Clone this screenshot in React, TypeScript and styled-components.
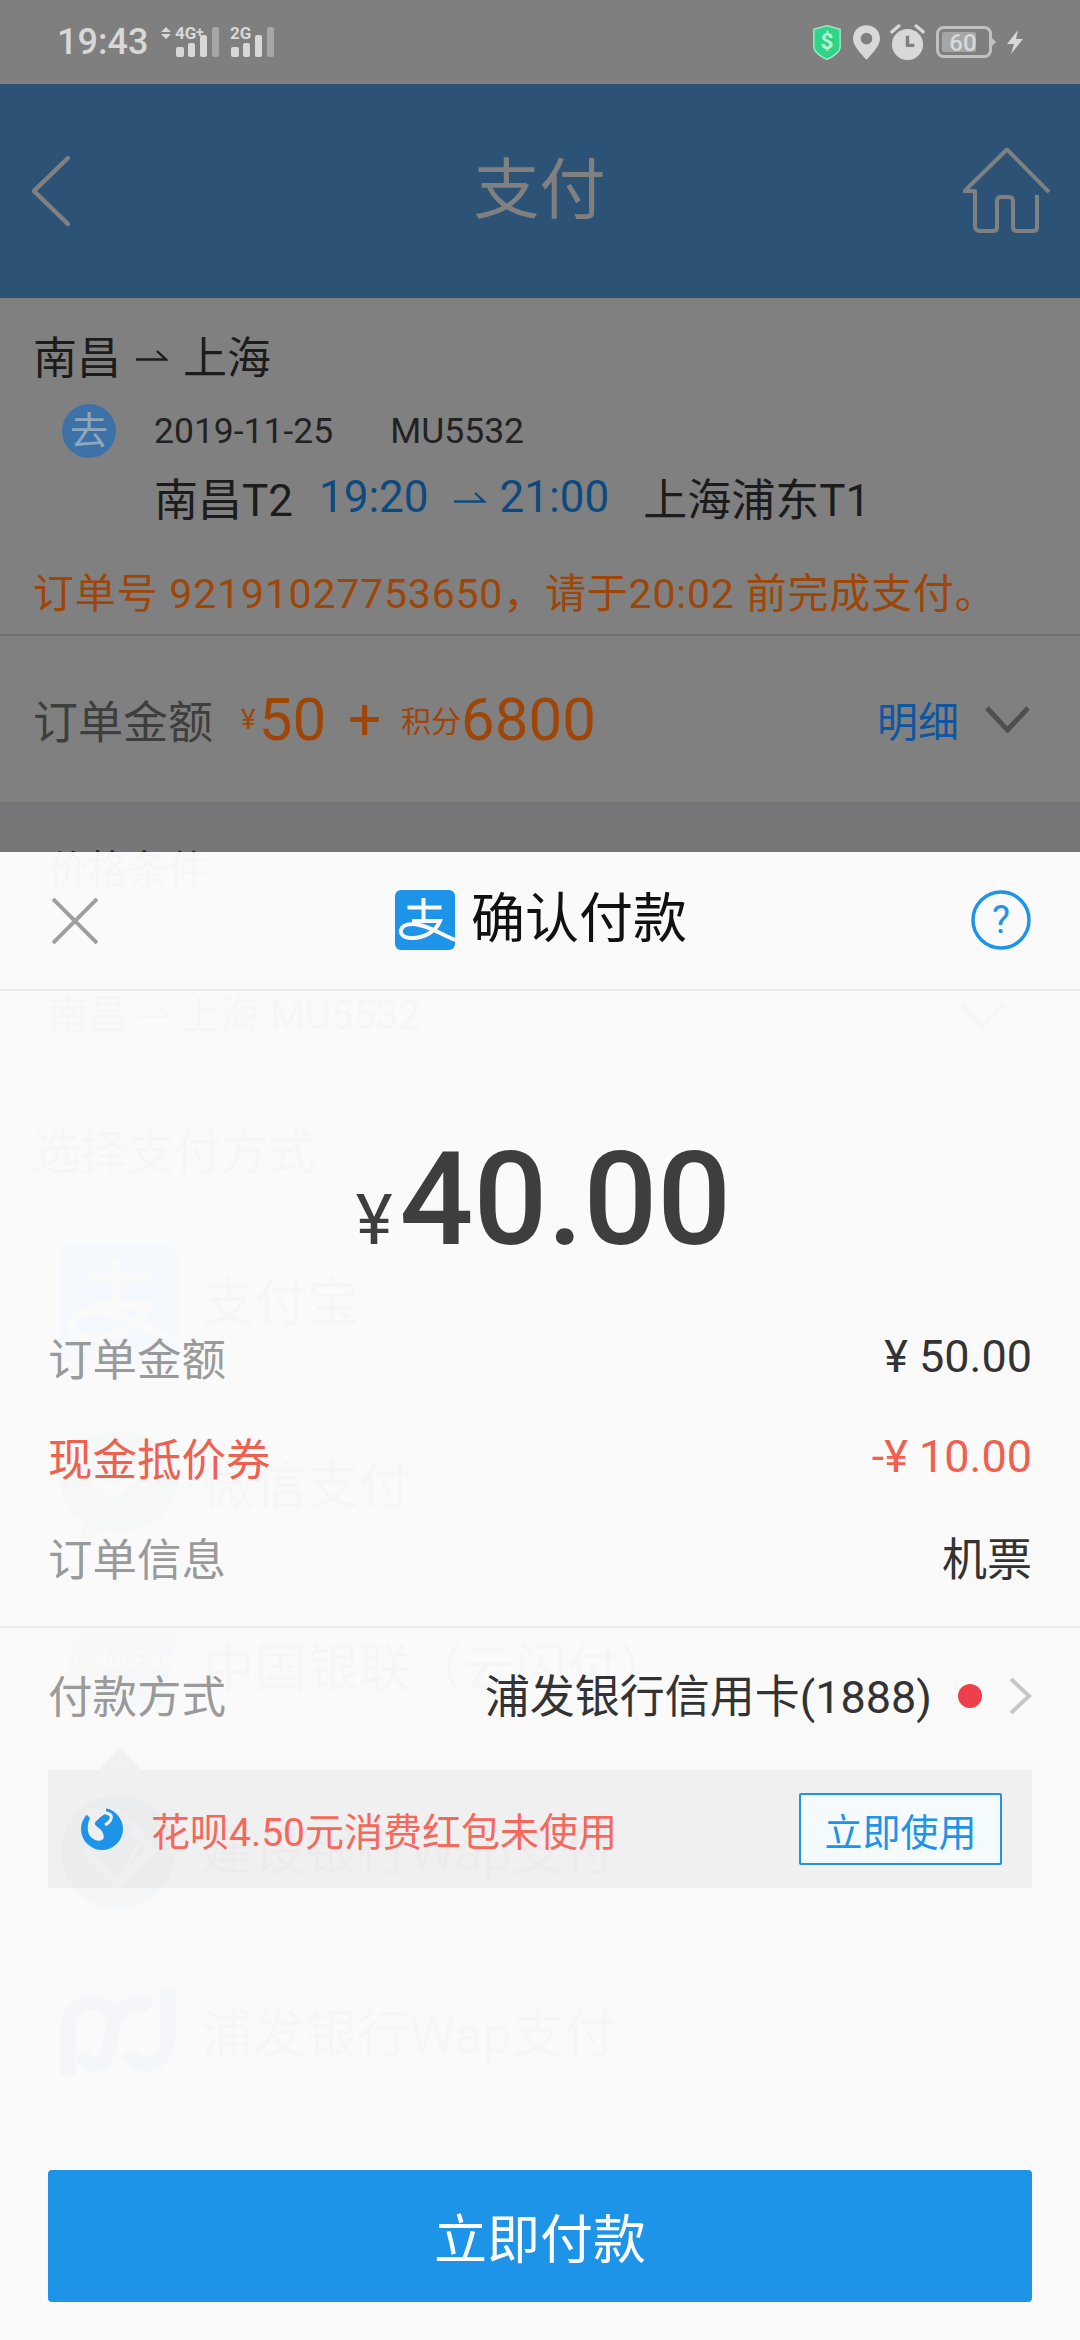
import styled, {createGlobalStyle} from "styled-components";

const GlobalStyle = createGlobalStyle`
  html, body {
    margin: 0;
    padding: 0;
    background: #808080;
  }
  * {
    box-sizing: border-box;
  }
`

const FONT = `Roboto, "Noto Sans CJK SC", sans-serif`

const Page = styled.div`
  position: relative;
  width: 1080px;
  height: 2340px;
  overflow: hidden;
  background: #808080;
  font-family: ${FONT};
  color: #1f1f1f;
`
const StatusBar = styled.div`
  height: 84px;
  padding: 0 56px 0 57px;
  display: flex;
  align-items: center;
  justify-content: space-between;
  background: #7f7f7f;
`
const StatusLeft = styled.div`
  display: flex;
  align-items: center;
  gap: 12px;
`
const StatusRight = styled.div`
  display: flex;
  align-items: center;
  gap: 10.5px;
`
const Time = styled.span`
  font-size: 36px;
  font-weight: 500;
  color: #d8d8d8;
`
const Header = styled.div`
  height: 214px;
  padding: 0 30px 0 32px;
  display: flex;
  align-items: center;
  justify-content: space-between;
  background: #2c5276;
`
const HeaderTitle = styled.div`
  font-size: 66px;
  line-height: 1;
  color: #808080;
  margin-left: 46px;
`
const Trip = styled.div`
  height: 338px;
  padding: 27px 33px 0;
  border-bottom: 2px solid #707070;
`
const Route = styled.div`
  display: flex;
  align-items: center;
  gap: 15px;
  height: 60px;
  font-size: 44px;
  color: #1c1c1c;
`
const FlightRow = styled.div`
  display: flex;
  align-items: center;
  margin: 19px 0 0 29px;
  height: 54px;
`
const GoBadge = styled.div`
  width: 54px;
  height: 54px;
  border-radius: 50%;
  background: #3d72a8;
  color: #8fa6bd;
  font-size: 38px;
  line-height: 54px;
  text-align: center;
  margin-right: 38px;
`
const FlightText = styled.span<{ $gap?: number }>`
  font-size: 35.5px;
  color: #222;
  margin-right: ${p => p.$gap || 0}px;
`
const TimeRow = styled.div`
  display: flex;
  align-items: center;
  height: 60px;
  margin: 9px 0 0 121px;
  font-size: 44px;
  color: #1c1c1c;
`
const Clock = styled.span<{ $left: number, $right: number }>`
  color: #0c4a80;
  margin: 0 ${p => p.$right}px 0 ${p => p.$left}px;
`
const OrderNotice = styled.div`
  margin-top: 39px;
  font-size: 41px;
  letter-spacing: .8px;
  line-height: 56px;
  color: #9e4508;
  white-space: nowrap;
`
const AmountRow = styled.div`
  height: 166px;
  padding: 0 50px 0 33px;
  display: flex;
  align-items: center;
`
const AmountLabel = styled.span`
  font-size: 45px;
  color: #3e3e3e;
  margin-right: 28px;
`
const Money = styled.span<{ $size: number, $after?: number }>`
  font-size: ${p => p.$size}px;
  color: #9e4508;
  margin-right: ${p => p.$after || 0}px;
`
const Plus = styled.span`
  font-size: 58px;
  color: #9e4508;
  margin: 0 20px 0 22px;
`
const Detail = styled.span`
  margin-left: auto;
  margin-right: 26px;
  font-size: 41px;
  color: #0f56a0;
`
const GrayBand = styled.div`
  height: 50px;
  border-top: 1px solid #717171;
  background: #77777a;
`
const GhostBlock = styled.div`
  margin-top: -3px;
  padding: 0 75px 0 48px;
  color: #222;
`
const GhostLine = styled.div`
  display: flex;
  align-items: center;
  height: 36px;
  font-size: 40px;
`
const GhostRoute = styled(GhostLine)`
  height: 84px;
  margin-top: 85px;
  gap: 10px;
`
const GhostPush = styled.div`
  margin-left: auto;
  margin-top: 6px;
`
const GhostTitle = styled.div`
  height: 62px;
  margin: 63px 0 32px;
  padding-left: 33px;
  display: flex;
  align-items: center;
  font-size: 47px;
  color: #222;
`
const PayRow = styled.div`
  height: 183px;
  padding-left: 60px;
  display: flex;
  align-items: center;
  gap: 25px;
  font-size: 52px;
  color: #222;
`
const PayLabel = styled.span`
  margin-bottom: 8px;
`
const Sheet = styled.div`
  position: absolute;
  left: 0;
  right: 0;
  bottom: 0;
  height: 1488px;
  display: flex;
  flex-direction: column;
  background: rgba(255, 255, 255, .96);
`
const SheetHeader = styled.div`
  height: 139px;
  flex: none;
  padding: 0 49px 0 52px;
  display: flex;
  align-items: flex-start;
  justify-content: space-between;
  border-bottom: 2px solid #ececec;
`
const SheetClose = styled.div`
  margin-top: 46px;
  height: 46px;
`
const SheetTitle = styled.div`
  margin-top: 38px;
  margin-left: 13px;
  display: flex;
  align-items: center;
  gap: 16px;
  font-size: 54px;
  line-height: 60px;
  color: #111;
`
const Help = styled.div`
  margin-top: 38px;
  height: 60px;
`
const Total = styled.div`
  height: 315px;
  flex: none;
  display: flex;
  align-items: baseline;
  justify-content: center;
  padding: 143px 0 0 7px;
  line-height: 132px;
  color: #3e3e3e;
`
const TotalCurrency = styled.span`
  font-size: 70px;
  margin-right: 7px;
`
const TotalValue = styled.span`
  font-size: 130px;
  font-weight: 500;
`
const InfoRow = styled.div<{ $tone?: string }>`
  height: 100px;
  flex: none;
  padding: 0 48px;
  display: flex;
  align-items: center;
  justify-content: space-between;
  font-size: 45px;
  color: ${p => p.$tone || "#333"};
`
const InfoLabel = styled.span<{ $tone?: string }>`
  font-size: 44.5px;
  color: ${p => p.$tone || "#9a9a9a"};
`
const Divider = styled.div`
  height: 2px;
  flex: none;
  margin-top: 20px;
  background: #ececec;
`
const MethodRow = styled(InfoRow)`
  height: 136px;
`
const MethodLabel = styled(InfoLabel)`
  margin-bottom: 5px;
`
const MethodValue = styled.div`
  display: flex;
  align-items: center;
  color: #333;
`
const MethodCard = styled.span`
  margin-bottom: 5px;
`
const RedDot = styled.span`
  width: 24px;
  height: 24px;
  margin: 0 26px 0 26px;
  border-radius: 50%;
  background: #ee3f4a;
`
const Tip = styled.div`
  position: relative;
  flex: none;
  height: 118px;
  margin: 6px 48px 0;
  padding: 0 30px 0 33px;
  display: flex;
  align-items: center;
  background: rgba(0, 0, 0, .04);
  &::before {
    content: "";
    position: absolute;
    left: 56px;
    top: -16px;
    width: 32px;
    height: 32px;
    transform: rotate(45deg);
    clip-path: polygon(0 0, 100% 0, 0 100%);
    background: #f1f1f1;
    border-radius: 3px 0 0 0;
  }
`
const TipText = styled.span`
  margin-left: 28px;
  font-size: 39px;
  color: #f8675c;
`
const UseButton = styled.button`
  margin-left: auto;
  width: 203px;
  height: 72px;
  padding: 0;
  border: 2px solid #1e94e8;
  border-radius: 2px;
  background: #f5fafd;
  font-family: ${FONT};
  font-size: 38px;
  color: #1e94e8;
`
const PayButton = styled.button`
  margin: auto 48px 38px;
  height: 132px;
  flex: none;
  border: 0;
  border-radius: 4px;
  background: #1e94e8;
  font-family: ${FONT};
  font-size: 53px;
  color: #fff;
`

const HalfArrow = ({color = "#1c1c1c"}: { color?: string }) => (
    <svg width="32" height="12" viewBox="0 0 32 12" fill="none" stroke={color} strokeWidth="2.4">
        <path d="M0 10.5H30L21 2"/>
    </svg>
)

const Chevron = ({color}: { color: string }) => (
    <svg width="45" height="27" viewBox="0 0 45 27" fill="none" stroke={color} strokeWidth="5">
        <path d="M2 2L22.5 24L43 2"/>
    </svg>
)

const SignalBars = ({x}: { x: number }) => (
    <g fill="#d8d8d8">
        <rect x={x} y="21" width="8" height="10" rx="2"/>
        <rect x={x + 12} y="17" width="7" height="14" rx="2"/>
        <rect x={x + 24} y="9" width="7" height="22" rx="2"/>
        <rect x={x + 36} y="1" width="7" height="30" rx="2" fill="#a6a6a6"/>
    </g>
)

const SignalLabel = ({x, children}: { x: number, children: string }) => (
    <text x={x} y="13" fontSize="17" fontWeight="700" fill="#d8d8d8" fontFamily="Roboto, sans-serif">{children}</text>
)

const Signal = () => (
    <svg width="116" height="32" viewBox="0 0 116 32" overflow="visible">
        <path d="M1 6L6 1L11 6ZM1 8H11L6 13Z" fill="#d8d8d8"/>
        <SignalLabel x={15}>4G</SignalLabel>
        <text x="36" y="11" fontSize="14" fontWeight="700" fill="#d8d8d8" fontFamily="Roboto, sans-serif">+</text>
        <SignalBars x={16}/>
        <SignalLabel x={70}>2G</SignalLabel>
        <SignalBars x={71}/>
    </svg>
)

const StatusIcons = () => (
    <StatusRight>
        <svg width="30" height="37" viewBox="0 0 32 38">
            <path d="M16 1L30 5V24C30 29 21 35 16 37C11 35 2 29 2 24V5Z" fill="#2fd586" stroke="#a3ebc4" strokeWidth="1.5"/>
            <text x="16" y="26" textAnchor="middle" fontSize="24" fontWeight="700" fill="#b9f2d3" fontFamily="Roboto, sans-serif">$</text>
        </svg>
        <svg width="27" height="35" viewBox="0 0 28 36">
            <path d="M14 0C6 0 0 6 0 14C0 22 9 30 14 36C19 30 28 22 28 14C28 6 22 0 14 0Z" fill="#d8d8d8"/>
            <circle cx="14" cy="14" r="6" fill="#7f7f7f"/>
        </svg>
        <svg width="35" height="37" viewBox="0 0 36 38">
            <circle cx="18" cy="21" r="16" fill="#d8d8d8"/>
            <path d="M18 12V22H25" fill="none" stroke="#7f7f7f" strokeWidth="3.5"/>
            <path d="M2 8L9 2M34 8L27 2" stroke="#d8d8d8" strokeWidth="3.5" strokeLinecap="round"/>
        </svg>
        <svg width="60" height="32" viewBox="0 0 60 32">
            <rect x="1.5" y="1.5" width="53" height="29" rx="6" fill="none" stroke="#c0c0c0" strokeWidth="3"/>
            <rect x="6" y="6" width="34" height="20" rx="2" fill="#a6a6a6"/>
            <path d="M56 12L60 16L56 20Z" fill="#c0c0c0"/>
            <text x="27" y="24.5" textAnchor="middle" fontSize="24" fontWeight="500" fill="#d8d8d8" fontFamily="Roboto, sans-serif">60</text>
        </svg>
        <svg width="18" height="24" viewBox="0 0 18 24">
            <path d="M12 0L1 14H8L5 24L17 9H10Z" fill="#d8d8d8"/>
        </svg>
    </StatusRight>
)

const AlipayLogo = ({size = 60, fill = "#1e94e8", mark = "#fafafa"}: { size?: number, fill?: string, mark?: string }) => (
    <svg width={size} height={size} viewBox="0 0 60 60">
        <rect width="60" height="60" rx="6" fill={fill}/>
        <path d="M12.5 17.5H46.5M28.5 8V31M17 31H45C41 41 30 48 17 48C8 48 5 44 6 40C7 36 12 34 18 34C30 34 46 44 60 50"
              fill="none" stroke={mark} strokeWidth="4"/>
    </svg>
)

const WechatGhost = () => (
    <svg width="118" height="110" viewBox="0 0 118 110">
        <path d="M59 0C26 0 1 21 1 50C1 67 10 82 24 91L20 110L44 98C49 99 54 100 59 100C92 100 117 79 117 50C117 21 92 0 59 0Z" fill="#004a20"/>
        <path d="M34 46L52 62L100 26" fill="none" stroke="#808080" strokeWidth="10"/>
    </svg>
)

const UnionGhost = () => (
    <svg width="118" height="74" viewBox="0 0 118 74">
        <path d="M22 0H50L34 74H8Q0 74 2 64L14 8Q16 0 22 0Z" fill="#803030"/>
        <path d="M50 0H112Q119 0 117 8L104 66Q102 74 96 74H34Z" fill="#103a50"/>
        <text x="13" y="36" fontSize="24" fontStyle="italic" fontWeight="700" fill="#808080" fontFamily="Roboto, sans-serif">UnionPay</text>
    </svg>
)

const CcbGhost = () => (
    <svg width="116" height="116" viewBox="0 0 116 116" fill="none">
        <circle cx="58" cy="58" r="57" fill="#10205a"/>
        <path d="M30 42L58 16L84 42L58 86L24 58" stroke="#808080" strokeWidth="3"/>
        <path d="M24 56L58 90L92 56L72 36" stroke="#808080" strokeWidth="8"/>
    </svg>
)

const SpdGhost = () => (
    <svg width="116" height="98" viewBox="0 0 116 98" fill="none" stroke="#0a2a60" strokeWidth="15">
        <path d="M8 90V42C8 26 20 17 32 17C42 17 48 22 52 30"/>
        <path d="M90 20C78 14 62 18 54 36C50 48 52 76 36 78C30 78 26 76 22 68"/>
        <path d="M108 2V52C108 68 98 78 86 78C78 78 72 74 68 66"/>
    </svg>
)

const HuabeiIcon = () => (
    <svg width="42" height="42" viewBox="0 0 42 42">
        <circle cx="21" cy="21" r="21" fill="#1e94e8"/>
        <path d="M4 0L5 6L9 10C6 16 6 24 9 28C12 32 18 34 21 32C24 30 23 26 20 22C17 19 13 17 14 15C15 12 21 9 25 4L25 0Z" fill="#efefef"/>
        <path d="M19 6C24 3 32 6 30 11C29 14 26 16 24 17" fill="none" stroke="#efefef" strokeWidth="3"/>
        <ellipse cx="21.5" cy="10.5" rx="3" ry="2" fill="#1e94e8"/>
    </svg>
)

const App = () => {
    return (
        <Page>
            <GlobalStyle/>
            <StatusBar>
                <StatusLeft>
                    <Time>19:43</Time>
                    <Signal/>
                </StatusLeft>
                <StatusIcons/>
            </StatusBar>
            <Header>
                <svg width="38" height="70" viewBox="0 0 38 70" fill="none" stroke="#808080" strokeWidth="4.5" strokeLinecap="round">
                    <path d="M36 2L2 35L36 68"/>
                </svg>
                <HeaderTitle>支付</HeaderTitle>
                <svg width="87" height="86" viewBox="0 0 87 86" fill="none" stroke="#808080" strokeWidth="4" strokeLinejoin="round">
                    <path d="M86 44L44 1.5L1.5 43H12V78Q12 83 17 83H30Q34 83 34 79V53Q34 49 38 49H46Q50 49 50 53V79Q50 83 54 83H70Q74 83 74 79V47"/>
                </svg>
            </Header>
            <Trip>
                <Route>南昌<HalfArrow/>上海</Route>
                <FlightRow>
                    <GoBadge>去</GoBadge>
                    <FlightText $gap={57}>2019-11-25</FlightText>
                    <FlightText>MU5532</FlightText>
                </FlightRow>
                <TimeRow>
                    南昌T2
                    <Clock $left={26} $right={25}>19:20</Clock>
                    <HalfArrow color="#0c4a80"/>
                    <Clock $left={14} $right={34}>21:00</Clock>
                    上海浦东T1
                </TimeRow>
                <OrderNotice>订单号 92191027753650，请于20:02 前完成支付。</OrderNotice>
            </Trip>
            <AmountRow>
                <AmountLabel>订单金额</AmountLabel>
                <Money $size={28} $after={3}>¥</Money>
                <Money $size={60}>50</Money>
                <Plus>+</Plus>
                <Money $size={30}>积分</Money>
                <Money $size={60}>6800</Money>
                <Detail>明细</Detail>
                <Chevron color="#4f4f4f"/>
            </AmountRow>
            <GrayBand/>
            <GhostBlock>
                <GhostLine>价格条件</GhostLine>
                <GhostRoute>
                    南昌<HalfArrow color="#222"/>上海 MU5532
                    <GhostPush><Chevron color="#222"/></GhostPush>
                </GhostRoute>
            </GhostBlock>
            <GhostTitle>选择支付方式</GhostTitle>
            <PayRow><AlipayLogo size={118} fill="#0050b4" mark="#808080"/><PayLabel>支付宝</PayLabel></PayRow>
            <PayRow><WechatGhost/><PayLabel>微信支付</PayLabel></PayRow>
            <PayRow><UnionGhost/><PayLabel>中国银联（云闪付）</PayLabel></PayRow>
            <PayRow><CcbGhost/><PayLabel>建设银行Wap支付</PayLabel></PayRow>
            <PayRow><SpdGhost/><PayLabel>浦发银行Wap支付</PayLabel></PayRow>
            <Sheet>
                <SheetHeader>
                    <SheetClose>
                        <svg width="46" height="46" viewBox="0 0 46 46" stroke="#9f9f9f" strokeWidth="4">
                            <path d="M1 1L45 45M45 1L1 45"/>
                        </svg>
                    </SheetClose>
                    <SheetTitle>
                        <AlipayLogo/>
                        确认付款
                    </SheetTitle>
                    <Help>
                        <svg width="60" height="60" viewBox="0 0 60 60">
                            <circle cx="30" cy="30" r="28" fill="none" stroke="#1e94e8" strokeWidth="3.5"/>
                            <text x="30" y="43" textAnchor="middle" fontSize="38" fill="#1e94e8" fontFamily="Roboto, sans-serif">?</text>
                        </svg>
                    </Help>
                </SheetHeader>
                <Total>
                    <TotalCurrency>¥</TotalCurrency>
                    <TotalValue>40.00</TotalValue>
                </Total>
                <InfoRow>
                    <InfoLabel>订单金额</InfoLabel>
                    <span>¥ 50.00</span>
                </InfoRow>
                <InfoRow $tone="#f0604f">
                    <InfoLabel $tone="#f0604f">现金抵价券</InfoLabel>
                    <span>-¥ 10.00</span>
                </InfoRow>
                <InfoRow>
                    <InfoLabel>订单信息</InfoLabel>
                    <span>机票</span>
                </InfoRow>
                <Divider/>
                <MethodRow>
                    <MethodLabel>付款方式</MethodLabel>
                    <MethodValue>
                        <MethodCard>浦发银行信用卡(1888)</MethodCard>
                        <RedDot/>
                        <svg width="24" height="38" viewBox="0 0 24 38" fill="none" stroke="#c8c8c8" strokeWidth="4">
                            <path d="M3 2L21 19L3 36"/>
                        </svg>
                    </MethodValue>
                </MethodRow>
                <Tip>
                    <HuabeiIcon/>
                    <TipText>花呗4.50元消费红包未使用</TipText>
                    <UseButton>立即使用</UseButton>
                </Tip>
                <PayButton>立即付款</PayButton>
            </Sheet>
        </Page>
    )
}

export default App
